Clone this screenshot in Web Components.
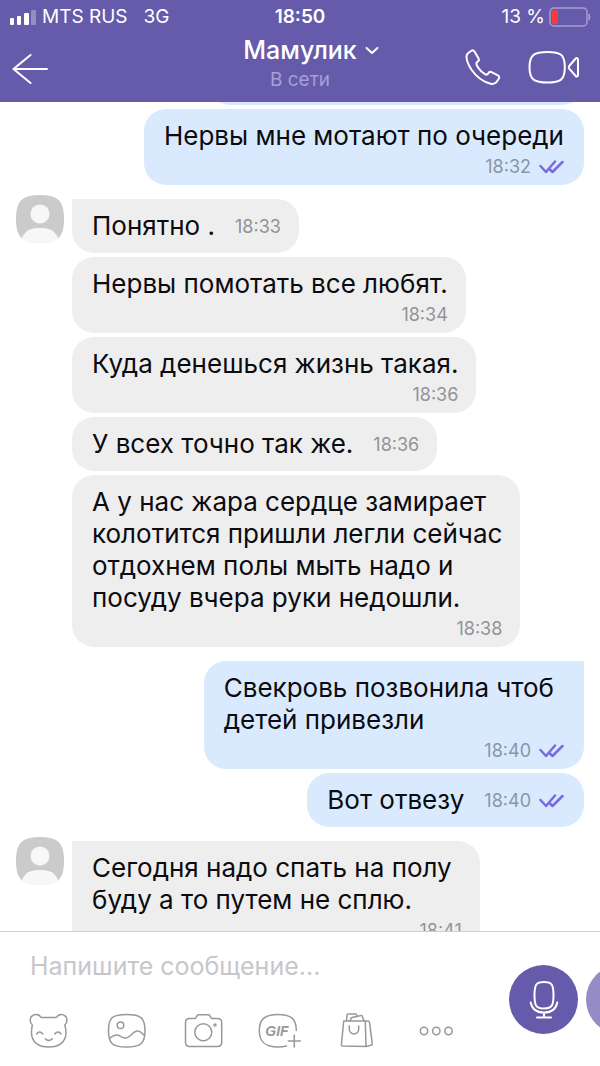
<!DOCTYPE html>
<html lang="ru">
<head>
<meta charset="utf-8">
<meta name="viewport" content="width=device-width, initial-scale=1">
<title>Мамулик</title>
<style>
  body {
    margin: 0;
    font-family: Inter, "Noto Sans", sans-serif;
    background: #fff;
    color: #0b0b10;
  }
</style>
</head>
<body>
<chat-app>
  <status-bar slot="top" carrier="MTS RUS" network="3G" time="18:50" battery="13"></status-bar>
  <chat-header slot="top" name="Мамулик" status="В сети"></chat-header>

  <message-group out>
    <chat-message class="previous" out></chat-message>
    <chat-message out time="18:32">Нервы мне мотают по очереди</chat-message>
  </message-group>
  <message-group>
    <chat-message first short time="18:33">Понятно .</chat-message>
    <chat-message time="18:34">Нервы помотать все любят.</chat-message>
    <chat-message time="18:36">Куда денешься жизнь такая.</chat-message>
    <chat-message short time="18:36">У всех точно так же.</chat-message>
    <chat-message time="18:38">А у нас жара сердце замирает<br>колотится пришли легли сейчас<br>отдохнем полы мыть надо и<br>посуду вчера руки недошли.</chat-message>
  </message-group>
  <message-group out>
    <chat-message out first wrapped time="18:40">Свекровь позвонила чтоб<br>детей привезли</chat-message>
    <chat-message out short time="18:40">Вот отвезу</chat-message>
  </message-group>
  <message-group>
    <chat-message first wrapped time="18:41">Сегодня надо спать на полу<br>буду а то путем не сплю.</chat-message>
  </message-group>

  <chat-composer slot="bottom"></chat-composer>
</chat-app>

<script>
class ChatApp extends HTMLElement {
  constructor() {
    super();
    const shadow = this.attachShadow({ mode: 'open' });

    shadow.innerHTML = `
      <style>
        :host {
          display: flex;
          flex-direction: column;
          height: 100vh;
          overflow: hidden;
        }

        header {
          background: #665bab;
          color: #fff;
        }

        main {
          flex: 1;
          min-height: 0;
          overflow: hidden;
        }

        .thread {
          display: flex;
          flex-direction: column;
          gap: 10px;
          margin-top: -55px;
        }

        ::slotted(*) {
          flex-shrink: 0;
        }
      </style>

      <header><slot name="top"></slot></header>
      <main><div class="thread"><slot></slot></div></main>
      <slot name="bottom"></slot>
    `;
  }
}

class StatusBar extends HTMLElement {
  constructor() {
    super();
    this.attachShadow({ mode: 'open' });
  }

  connectedCallback() {
    const level = Number(this.getAttribute('battery'));

    this.shadowRoot.innerHTML = `
      <style>
        :host {
          display: grid;
          grid-template-columns: 1fr auto 1fr;
          align-items: center;
          height: 34px;
          padding: 0 9px;
          font-size: 19px;
          line-height: 24px;
        }

        .left, .right {
          display: flex;
          align-items: center;
        }

        .left {
          gap: 6px;
        }

        .network {
          margin-left: 10px;
        }

        .right {
          justify-content: flex-end;
          gap: 4px;
        }

        time {
          font-weight: 600;
        }

        svg {
          display: block;
        }
      </style>

      <div class="left">
        <svg width="27" height="16" viewBox="0 0 27 16" fill="#fff" aria-hidden="true">
          <rect x="1" y="9" width="4" height="7" rx="1"/>
          <rect x="8" y="7" width="4" height="9" rx="1"/>
          <rect x="15" y="4" width="5" height="12" rx="1"/>
          <rect x="22" y="1" width="5" height="15" rx="1" opacity=".3"/>
        </svg>
        <span>${this.getAttribute('carrier')}</span>
        <span class="network">${this.getAttribute('network')}</span>
      </div>
      <time>${this.getAttribute('time')}</time>
      <div class="right">
        <span>${level} %</span>
        <svg width="42" height="20" viewBox="0 0 42 20" aria-hidden="true">
          <rect x="1" y="1" width="37" height="18" rx="4" fill="none" stroke="#a69fd0" stroke-width="1.5"/>
          <rect x="3" y="3" width="${Math.round(level * 0.4) + 1}" height="14" rx="2" fill="#fb3b3a"/>
          <path d="M40 7q2 3 0 6z" fill="#a69fd0" stroke="#a69fd0"/>
        </svg>
      </div>
    `;
  }
}

class ChatHeader extends HTMLElement {
  constructor() {
    super();
    this.attachShadow({ mode: 'open' });
  }

  connectedCallback() {
    this.shadowRoot.innerHTML = `
      <style>
        :host {
          display: grid;
          grid-template-columns: 1fr auto 1fr;
          align-items: center;
          height: 68px;
          padding: 0 20px;
        }

        button {
          padding: 0;
          border: 0;
          background: none;
          color: inherit;
          font: inherit;
          cursor: pointer;
        }

        svg {
          display: block;
          fill: none;
          stroke: currentColor;
          stroke-width: 2;
          stroke-linecap: round;
          stroke-linejoin: round;
        }

        .back {
          justify-self: start;
          margin-left: -8px;
        }

        .who {
          padding-bottom: 6px;
          text-align: center;
        }

        h1 {
          margin: 0;
          font-size: 25px;
          font-weight: 500;
          line-height: 30px;
        }

        h1 button {
          display: flex;
          align-items: center;
          gap: 8px;
        }

        /* keeps the name itself centred over the status */
        h1 svg {
          margin-right: -22px;
        }

        p {
          margin: 0;
          font-size: 19px;
          line-height: 30px;
          color: #a79fd6;
        }

        .calls {
          display: flex;
          justify-self: end;
          gap: 25px;
        }
      </style>

      <button class="back" aria-label="Назад">
        <svg width="36" height="32" viewBox="0 0 36 32"><path d="M35 17H1.500M18.500 3L1.500 17l17 14"/></svg>
      </button>
      <div class="who">
        <h1>
          <button>${this.getAttribute('name')}
            <svg width="14" height="8" viewBox="0 0 14 8"><path d="M1.500 2L7 7l5.500-5"/></svg>
          </button>
        </h1>
        <p>${this.getAttribute('status')}</p>
      </div>
      <div class="calls">
        <button aria-label="Позвонить">
          <svg width="40" height="40" viewBox="0 0 40 40">
            <path d="M5 5.300L8.300 2.800C9.700 2 11 2.300 11.600 3.700L15.600 10.600C16.200 11.800 15.800 12.800 14.800 13.500C13.400 14.400 13 15.500 13.700 17C15.300 20.500 18.500 24 22 26.200C23.500 27.100 24.600 26.600 25.300 25.200C26 24 27.200 23.600 28.500 24.200L34.900 27.300C36.300 28 36.600 29.300 35.800 30.600C33.700 34.600 31 36.700 27.600 35.800C20.500 33.800 13.500 29 8.700 22C5.400 17.200 3.600 12.700 3.500 8.800C3.500 7.300 3.900 6.200 5 5.300Z"/>
          </svg>
        </button>
        <button aria-label="Видеозвонок">
          <svg width="52" height="40" viewBox="0 0 52 40">
            <path d="M19.500 4C32.500 4 36.800 6.500 36.800 19.200S32.500 34.500 19.500 34.500S1.500 31.900 1.500 19.200S6.500 4 19.500 4Z"/>
            <path d="M41.200 18L47.700 10.500C48.700 9.500 50 10 50 11.500V27C50 28.500 48.700 29 47.700 28L41.200 20.600Q40.200 19.300 41.200 18Z"/>
          </svg>
        </button>
      </div>
    `;
  }
}

class MessageGroup extends HTMLElement {
  constructor() {
    super();
    const shadow = this.attachShadow({ mode: 'open' });

    shadow.innerHTML = `
      <style>
        :host {
          display: grid;
          grid-template-columns: 48px 1fr;
          gap: 8px;
          padding: 0 16px;
        }

        :host([out]) .avatar {
          visibility: hidden;
        }

        .avatar {
          display: block;
        }

        .messages {
          display: flex;
          flex-direction: column;
          align-items: flex-start;
          gap: 4px;
          padding-top: 4px;
        }

        :host([out]) .messages {
          align-items: flex-end;
        }
      </style>

      <svg class="avatar" width="48" height="48" viewBox="0 0 48 48" aria-hidden="true">
        <path d="M24 0C42 0 48 6 48 24S42 48 24 48S0 42 0 24S6 0 24 0Z" fill="#cbcbcb"/>
        <circle cx="24" cy="19" r="9.500" fill="#f7f7f7"/>
        <path d="M5.500 44C9 35.500 14 33 24 33S39 35.500 42.500 44C38.500 47 33 48 24 48S9.500 47 5.500 44Z" fill="#f7f7f7"/>
      </svg>
      <div class="messages"><slot></slot></div>
    `;
  }
}

class ChatMessage extends HTMLElement {
  constructor() {
    super();
    this.attachShadow({ mode: 'open' });
  }

  connectedCallback() {
    const ticks = this.hasAttribute('out') ? `
      <svg width="25" height="14" viewBox="0 0 25 14" aria-label="Просмотрено">
        <path d="M1.500 6L7 12L16 1.500M11.500 10L13.500 12L23.500 2"/>
      </svg>` : '';

    this.shadowRoot.innerHTML = `
      <style>
        :host {
          display: flex;
          flex-direction: column;
          box-sizing: border-box;
          min-height: 54px;
          padding: 11px 18px 6px 20px;
          border-radius: 22px;
          background: #eee;
          font-size: 26px;
          line-height: 32px;
        }

        :host([out]) {
          background: #d9eafe;
          padding-right: 20px;
        }

        :host([first]) {
          border-top-left-radius: 0;
        }

        :host([out][first]) {
          border-radius: 22px 0 22px 22px;
        }

        :host([short]) {
          flex-direction: row;
          align-items: center;
          gap: 20px;
          padding-bottom: 11px;
        }

        :host([wrapped]) .text {
          padding-right: 10px;
        }

        :host(.previous) {
          width: 376px;
        }

        .meta {
          display: flex;
          align-items: center;
          justify-content: flex-end;
          gap: 8px;
          margin-top: 3px;
          font-size: 18px;
          line-height: 24px;
          color: #929298;
        }

        :host([out]) .meta {
          color: #8996a6;
        }

        :host([short]) .meta {
          margin-top: 2px;
        }

        svg {
          fill: none;
          stroke: #7b68e4;
          stroke-width: 2.500;
          stroke-linecap: round;
          stroke-linejoin: round;
        }
      </style>

      <div class="text"><slot></slot></div>
      ${this.hasAttribute('time') ? `<div class="meta"><time>${this.getAttribute('time')}</time>${ticks}</div>` : ''}
    `;
  }
}

class ChatComposer extends HTMLElement {
  constructor() {
    super();
    const shadow = this.attachShadow({ mode: 'open' });

    shadow.innerHTML = `
      <style>
        :host {
          display: flex;
          box-sizing: border-box;
          height: 135px;
          border-top: 1px solid #d0d0d4;
          background: #fff;
        }

        .compose {
          flex: 1;
          min-width: 0;
        }

        input {
          display: block;
          box-sizing: border-box;
          width: 100%;
          height: 68px;
          padding: 0 0 0 30px;
          border: 0;
          outline: none;
          background: none;
          font: inherit;
          font-size: 25px;
          color: #0b0b10;
        }

        input::placeholder {
          color: #c7c7cb;
          opacity: 1;
        }

        .tools {
          display: flex;
          gap: 37px;
          padding: 11px 0 0 29px;
        }

        button {
          flex-shrink: 0;
          padding: 0;
          border: 0;
          background: none;
          cursor: pointer;
        }

        svg {
          display: block;
          overflow: visible;
          fill: none;
          stroke: #98989b;
          stroke-width: 1.500;
          stroke-linecap: round;
          stroke-linejoin: round;
        }

        text {
          fill: #98989b;
          stroke: none;
          font-size: 14px;
          font-weight: 600;
          font-style: italic;
        }

        .record {
          display: flex;
          gap: 8px;
          width: 91px;
          padding-top: 33px;
          overflow: hidden;
        }

        .record button {
          display: grid;
          place-items: center;
          width: 69px;
          height: 69px;
          border-radius: 50%;
          background: #665bab;
        }

        .record .next {
          background: #958bc6;
        }

        .record svg {
          stroke: #fff;
          stroke-width: 2;
        }
      </style>

      <div class="compose">
        <input type="text" aria-label="Сообщение" placeholder="Напишите сообщение...">
        <div class="tools">
          <button aria-label="Стикеры">
            <svg width="40" height="40" viewBox="0 0 40 40">
              <path d="M12 6.500H27.500C28.500 4.500 30.300 3.500 32.300 3.500C35.500 3.500 38 6 38 9.200C38 11.200 37 12.900 35.800 14C36.500 16 37 19 37 21.500C37 31 30 36 19.700 36S2.500 31 2.500 21.500C2.500 19 2.800 16 3.400 14C2 13 1.200 11.200 1.200 9.200C1.200 6 3.700 3.500 7 3.500C9 3.500 11 4.500 12 6.500Z"/>
              <path d="M7.500 23q3.200-4 6.400 0M25.700 23q3.200-4 6.400 0M16.300 27.700q3.500 3.500 7 0"/>
            </svg>
          </button>
          <button aria-label="Галерея">
            <svg width="40" height="40" viewBox="0 0 40 40">
              <path d="M20.500 3.500C35 3.500 39 7 39 19.500S35 36 20.500 36S2.500 32 2.500 19.500S6 3.500 20.500 3.500Z"/>
              <circle cx="14.500" cy="14.300" r="3.300"/>
              <path d="M4 27C7 24.500 11 23.300 14 25C18.500 28 21 27.800 24.500 24.500C27.500 21.500 29 19.800 31.500 20C34 20 36.500 22.300 38.500 24.500"/>
            </svg>
          </button>
          <button aria-label="Камера">
            <svg width="40" height="40" viewBox="0 0 40 40">
              <path d="M6.500 7.500H12C13.500 7.500 13.500 3.800 15.500 3.800H25.500C27.500 3.800 27.500 7.500 29 7.500H34.500C37.300 7.500 38.700 9 38.700 11.700V31.300C38.700 34 37.300 35.500 34.500 35.500H6.500C3.800 35.500 2.500 34 2.500 31.300V11.700C2.500 9 3.800 7.500 6.500 7.500Z"/>
              <circle cx="20.300" cy="21.300" r="8.500"/>
              <circle cx="32" cy="14" r="1"/>
            </svg>
          </button>
          <button aria-label="Отправить GIF">
            <svg width="40" height="40" viewBox="0 0 40 40">
              <path d="M36.300 19.500C36.300 8 31 3.500 18 3.500S-.700 8-.700 19.500S5 36 18 36C21 36 24 35.700 26.500 35M34.300 24v12M28.300 30h12"/>
              <text x="17" y="25" text-anchor="middle">GIF</text>
            </svg>
          </button>
          <button aria-label="Магазин">
            <svg width="40" height="40" viewBox="0 0 40 40">
              <path d="M6.700 10H28.300L29 35.500L5.500 35Q4.300 34.900 4.400 33.700ZM28.300 10H31Q32.300 10 32.500 11.300L35.300 32.700Q35.400 34 34 34.300L29 35.500"/>
              <path d="M12.300 15V18C12.300 24.500 21.700 24.500 21.700 18V15"/>
              <path d="M9.500 10L10 4Q10.100 3 11.200 3H19L20 5M13.300 10L13.800 7.500Q14 6.700 15 6.500L24 4.500Q25 4.300 25.300 5.300L27 10"/>
            </svg>
          </button>
          <button aria-label="Ещё">
            <svg width="40" height="40" viewBox="0 0 40 40">
              <circle cx="10" cy="20" r="3.700"/><circle cx="22.300" cy="20" r="3.700"/><circle cx="34.500" cy="20" r="3.700"/>
            </svg>
          </button>
        </div>
      </div>
      <div class="record">
        <button aria-label="Голосовое сообщение">
          <svg width="40" height="40" viewBox="0 0 40 40">
            <path d="M20 2C28 2 29.500 5 29.500 15.200S28 28.500 20 28.500S10.500 25.500 10.500 15.200S12 2 20 2Z"/>
            <path d="M6.700 22.500C8 29.500 12.500 32.500 20 32.500S32 29.500 33.300 22.500M20 32.500V37.500M13 37.500H27"/>
          </svg>
        </button>
        <button class="next" aria-label="Видеосообщение"></button>
      </div>
    `;
  }
}

customElements.define('chat-app', ChatApp);
customElements.define('status-bar', StatusBar);
customElements.define('chat-header', ChatHeader);
customElements.define('message-group', MessageGroup);
customElements.define('chat-message', ChatMessage);
customElements.define('chat-composer', ChatComposer);
</script>
</body>
</html>
